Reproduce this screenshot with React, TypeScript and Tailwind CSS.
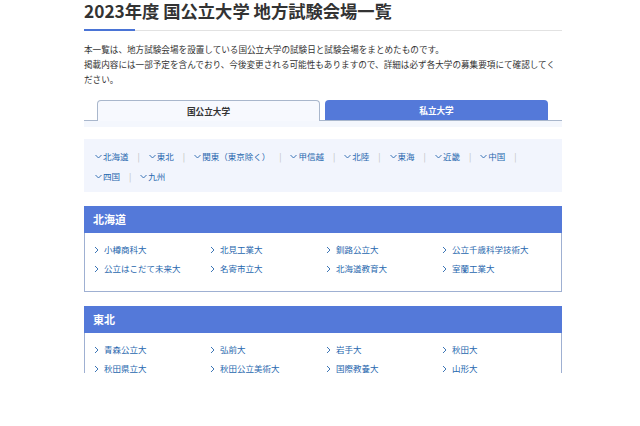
import React from 'react';

const font = { fontFamily: '"Noto Sans CJK JP", "Noto Sans", sans-serif' };

const regions = ['北海道', '東北', '関東（東京除く）', '甲信越', '北陸', '東海', '近畿', '中国', '四国', '九州'];

const sections = [
  {
    name: '北海道',
    schools: ['小樽商科大', '北見工業大', '釧路公立大', '公立千歳科学技術大', '公立はこだて未来大', '名寄市立大', '北海道教育大', '室蘭工業大'],
  },
  {
    name: '東北',
    schools: ['青森公立大', '弘前大', '岩手大', '秋田大', '秋田県立大', '秋田公立美術大', '国際教養大', '山形大'],
  },
];

const ChevronDown = () => (
  <svg width="7" height="5" viewBox="0 0 7 5" className="mr-[1px] shrink-0">
    <polyline points="0.5,1 3.5,4 6.5,1" fill="none" stroke="#2767ae" strokeWidth="0.9" />
  </svg>
);

const ChevronRight = () => (
  <svg width="5" height="8" viewBox="0 0 5 8" className="mr-[5px] shrink-0">
    <polyline points="1,1 4,4 1,7" fill="none" stroke="#2767ae" strokeWidth="0.9" />
  </svg>
);

const App = () => {
  return (
    <div className="w-full h-[373px] overflow-hidden bg-white text-[#333]" style={font}>
      <div className="ml-[84px] w-[478px]">
        <h1 className="text-[17.3px] font-bold leading-[22px] text-[#333]">2023年度 国公立大学 地方試験会場一覧</h1>

        {/* underline */}
        <div className="flex items-end mt-[7px]">
          <div className="w-[51px] h-[2px] bg-[#4a74d6]" />
          <div className="flex-1 h-px bg-[#e2e2e2]" />
        </div>

        <p className="mt-[11px] text-[8.6px] leading-[15px] text-[#333]">
          本一覧は、地方試験会場を設置している国公立大学の試験日と試験会場をまとめたものです。
          <br />
          掲載内容には一部予定を含んでおり、今後変更される可能性もありますので、詳細は必ず各大学の募集要項にて確認してください。
        </p>

        {/* tabs */}
        <div className="mt-[13px] flex gap-[5px] px-[13px] border-b border-[#a9b7cc]">
          <div className="w-[223px] h-[21px] -mb-px bg-[#f7f9fe] border border-b-0 border-[#a9b7cc] rounded-t-[4px] flex items-center justify-center text-[8.6px] font-bold text-[#333]">
            国公立大学
          </div>
          <div className="w-[223px] h-[20px] bg-[#5479d9] rounded-t-[4px] flex items-center justify-center text-[8.6px] font-bold text-white">
            私立大学
          </div>
        </div>
        <div className="h-[6px] bg-[#f4f7fd]" />

        {/* region nav */}
        <div className="mt-[12px] h-[53px] bg-[#f2f5fd] pl-[11px] pr-[9px] pt-[7px]">
          <div className="flex flex-wrap items-center text-[8.5px] leading-[20px] text-[#2767ae]">
            {regions.map((r, i) => (
              <div key={r} className="flex items-center">
                <ChevronDown />
                <span>{r}</span>
                {i < regions.length - 1 && <span className="ml-[9px] mr-[9px] text-[#bbb]">|</span>}
              </div>
            ))}
          </div>
        </div>

        {/* sections */}
        {sections.map((s) => (
          <div key={s.name} className="mt-[14px]">
            <div className="h-[27px] bg-[#5479d9] pl-[9px] flex items-center text-[11px] font-bold text-white">{s.name}</div>
            <div className="border border-t-0 border-[#9fb0d2] pl-[9px] pt-[7px] pb-[13px]">
              <div className="grid grid-cols-[116px_116px_116px_116px] text-[8.5px] leading-[19px] text-[#2767ae]">
                {s.schools.map((sc) => (
                  <div key={sc} className="flex items-center">
                    <ChevronRight />
                    <span>{sc}</span>
                  </div>
                ))}
              </div>
            </div>
          </div>
        ))}
      </div>
    </div>
  );
};

export default App;
